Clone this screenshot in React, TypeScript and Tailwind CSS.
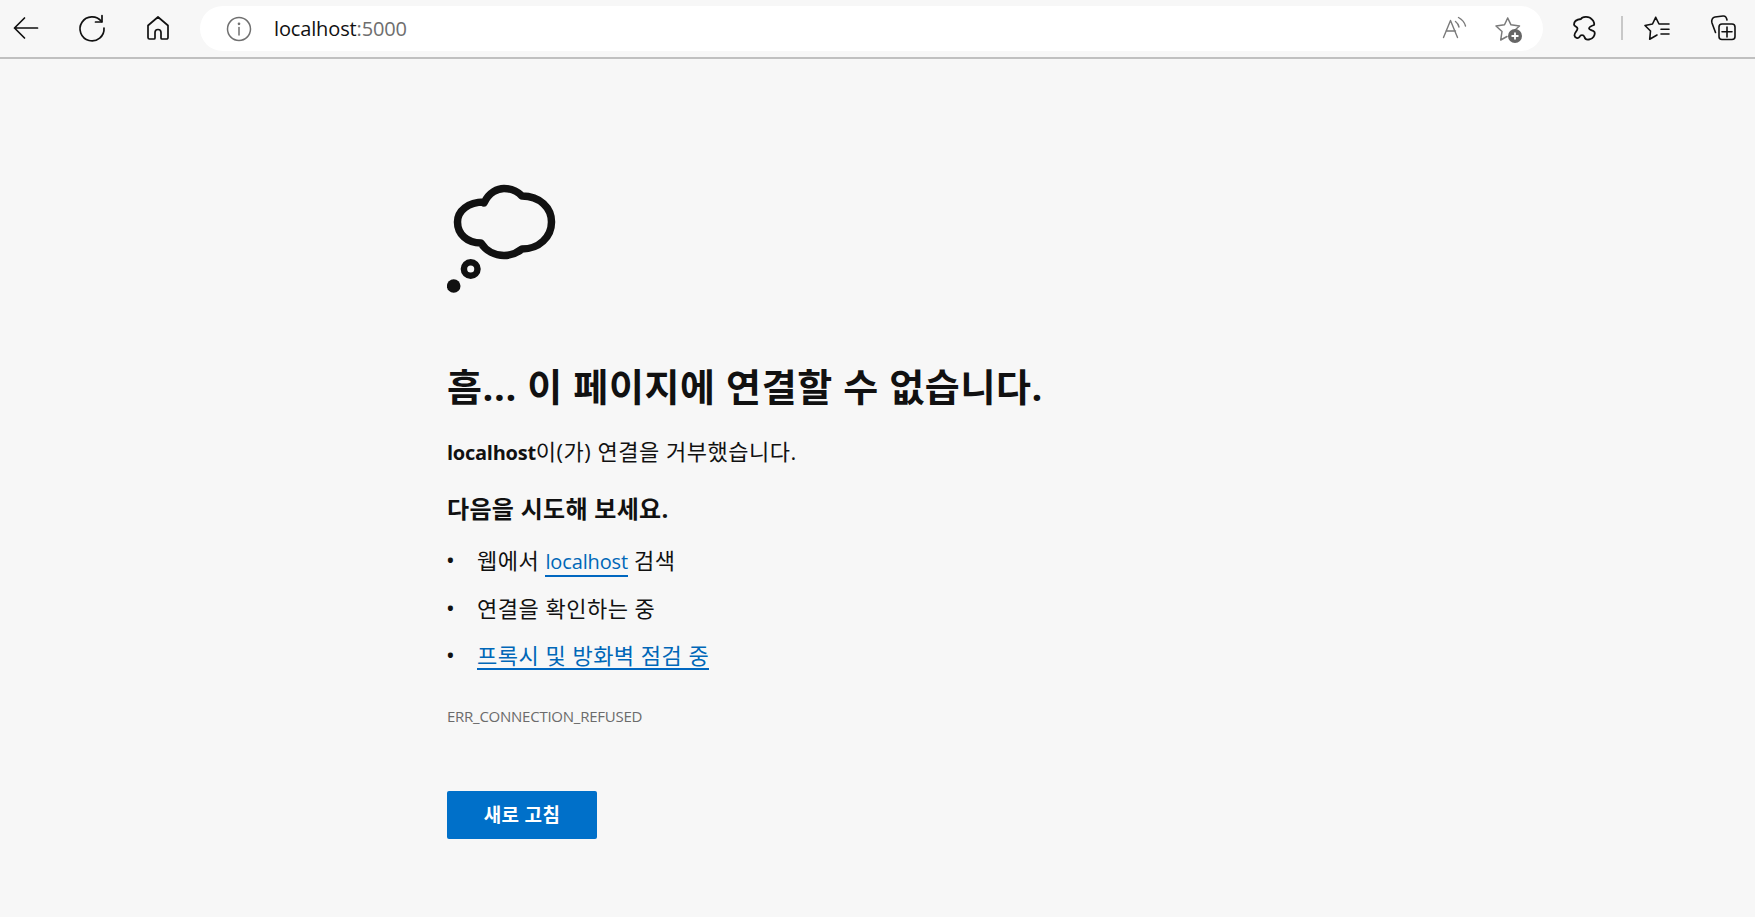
import React from "react";

function Back() {
  return (
    <svg width="30" height="30" viewBox="0 0 30 30" fill="none" stroke="#111" strokeWidth="1.7" strokeLinecap="round" strokeLinejoin="round">
      <path d="M3.5 15H26.5M13.5 5L3.5 15L13.5 25" />
    </svg>
  );
}
function Reload() {
  return (
    <svg width="30" height="30" viewBox="0 0 30 30" fill="none" stroke="#111" strokeWidth="1.7" strokeLinecap="round" strokeLinejoin="round">
      <path d="M24.5 8.5A12 12 0 1 0 27 15" />
      <path d="M25 2.5V9H18.5" />
    </svg>
  );
}
function Home() {
  return (
    <svg width="30" height="30" viewBox="0 0 30 30" fill="none" stroke="#111" strokeWidth="1.7" strokeLinecap="round" strokeLinejoin="round">
      <path d="M15 4L5 12.5V24.5A1.5 1.5 0 0 0 6.5 26H11A1 1 0 0 0 12 25V19.5A3 3 0 0 1 18 19.5V25A1 1 0 0 0 19 26H23.5A1.5 1.5 0 0 0 25 24.5V12.5Z" />
    </svg>
  );
}
function Info() {
  return (
    <svg width="26" height="26" viewBox="0 0 26 26" fill="none" stroke="#707070" strokeWidth="1.5" strokeLinecap="round">
      <circle cx="13" cy="13" r="11.5" />
      <path d="M13 11.5V19" />
      <circle cx="13" cy="7.8" r="0.6" fill="#707070" />
    </svg>
  );
}
function ReadAloud() {
  return (
    <svg width="26" height="26" viewBox="0 0 26 26" fill="none" stroke="#7a7a7a" strokeWidth="1.4" strokeLinecap="round" strokeLinejoin="round">
      <path d="M2.5 21.5L9.5 4.5L16.5 21.5M5 15H14.5" />
      <path d="M14.5 5.5C16.5 7 17.5 9 18 11M17.5 1.5C21 3.5 23.5 6 24.5 10" />
    </svg>
  );
}
function FavAdd() {
  return (
    <svg width="28" height="28" viewBox="0 0 28 28" fill="none">
      <path d="M13.7 3L17 9.8L25.5 11L21 15M13.7 3L10.5 9.8L2 11L8 16.5L6.7 25L13 21.5" stroke="#7a7a7a" strokeWidth="1.5" strokeLinejoin="round" strokeLinecap="round" />
      <circle cx="21" cy="21" r="7" fill="#666" />
      <path d="M21 17.5V24.5M17.5 21H24.5" stroke="#fff" strokeWidth="1.8" />
    </svg>
  );
}
function Ext() {
  return (
    <svg width="26" height="26" viewBox="0 0 26 26" fill="none" stroke="#111" strokeWidth="1.8" strokeLinejoin="round" strokeLinecap="round">
      <path d="M9 4C10 1.5 17 0.5 20 4.5C22 6 22.5 9 22 10C19 11 17 12 17 13.5C17 15 21 15 22.5 17C23.5 20 21 24 17 24.5C14.5 25 13 24 12.5 22C11.5 19.5 8.5 19.5 7.5 22C6 24 3 23 2.5 20.5C2 18 5.5 16 5.5 13.5C5.5 11.5 2 11.5 2 9.5C2 7 4 4.5 9 4Z" />
    </svg>
  );
}
function Favs() {
  return (
    <svg width="28" height="28" viewBox="0 0 28 28" fill="none" stroke="#111" strokeWidth="1.6" strokeLinejoin="round" strokeLinecap="round">
      <path d="M12.7 3.3L9.5 10L2 11.5L7.5 17L6.7 25.3L14 21M12.7 3.3L16 10H26M18 15.3H26M18 20H26" />
    </svg>
  );
}
function Collections() {
  return (
    <svg width="28" height="28" viewBox="0 0 28 28" fill="none" stroke="#111" strokeWidth="1.6" strokeLinejoin="round" strokeLinecap="round">
      <path d="M6.5 18.5L3 9C2 6 3.5 3.5 6 3L14 2C16 1.8 17.5 3 18 6" />
      <rect x="10" y="10" width="16" height="15.5" rx="3" />
      <path d="M18 13V23M13 17.8H23" />
    </svg>
  );
}

function Cloud() {
  return (
    <svg width="115" height="115" viewBox="17 10 115 115" fill="none" className="block">
      <path
        d="M54 33C59 22 68 18.5 74 18.5C82 18.5 88 22 92 26C110 26 121.5 38 121.5 52C121.5 67 109 79 92 79C87 83 81 85.5 74 85.5C65 85.5 56 81 51 73C37 73 27.5 64 27.5 52C27.5 41 38 32 54 32Z"
        stroke="#111"
        strokeWidth="7.5"
        strokeLinejoin="round"
      />
      <circle cx="40.7" cy="99" r="6.8" stroke="#111" strokeWidth="6.5" />
      <circle cx="23.7" cy="116" r="6.8" fill="#111" />
    </svg>
  );
}

export default function App() {
  return (
    <div className="h-[917px] w-[1755px] overflow-hidden bg-[#f7f7f7] text-[#111] font-['Open_Sans','Noto_Sans_CJK_KR',sans-serif]">
      <div className="flex h-[59px] items-start border-b-2 border-[#c0c0c0] bg-[#f7f7f7]">
        <div className="flex h-[57px] w-[200px] shrink-0 items-center pl-[11px] pb-[2px]">
          <Back />
          <div className="ml-[36px]"><Reload /></div>
          <div className="ml-[36px]"><Home /></div>
        </div>
        <div className="mt-[6px] flex h-[45px] w-[1343px] shrink-0 items-center rounded-full bg-white pl-[26px] pr-[21px]">
          <Info />
          <div className="ml-[22px] flex-1 text-[20px] tracking-[-0.14px] text-[#111]">
            localhost<span className="text-[#6e6e6e]">:5000</span>
          </div>
          <ReadAloud />
          <div className="ml-[27px]"><FavAdd /></div>
        </div>
        <div className="flex h-[57px] flex-1 items-center pl-[29px] pb-[2px]">
          <Ext />
          <div className="ml-[23px] h-[24px] w-[2px] bg-[#c8c8c8]" />
          <div className="ml-[20px]"><Favs /></div>
          <div className="ml-[38px]"><Collections /></div>
        </div>
      </div>

      <div className="ml-[447px] w-[700px] pt-[121px]">
        <Cloud />
        <h1 className="mt-[67px] text-[38px] leading-[48px] tracking-[0.6px] font-bold text-[#111]">
          흠... 이 페이지에 연결할 수 없습니다.
        </h1>
        <p className="mt-[27px] text-[22px] leading-[28px] tracking-[0.5px]">
          <b className="text-[20px] font-bold tracking-[-0.25px]">localhost</b>이(가) 연결을 거부했습니다.
        </p>
        <h2 className="mt-[27px] text-[24px] leading-[30px] tracking-[0.3px] font-bold">다음을 시도해 보세요.</h2>
        <ul className="mt-[22px] text-[22px] leading-[28px] tracking-[0.5px]">
          <li className="flex h-[48px] items-start">
            <span className="w-[30px] shrink-0 text-[18px] font-bold">•</span>
            <span>
              웹에서{" "}
              <a className="border-b-2 border-[#0067c0] text-[20px] tracking-[-0.15px] text-[#0067b8]">localhost</a>{" "}
              검색
            </span>
          </li>
          <li className="flex h-[47px] items-start">
            <span className="w-[30px] shrink-0 text-[18px] font-bold">•</span>
            <span>연결을 확인하는 중</span>
          </li>
          <li className="flex h-[48px] items-start">
            <span className="w-[30px] shrink-0 text-[18px] font-bold">•</span>
            <a className="h-[29px] border-b-2 border-[#0067c0] text-[#0067b8]">프록시 및 방화벽 점검 중</a>
          </li>
        </ul>
        <div className="mt-[17px] text-[15px] leading-[20px] tracking-[-0.25px] text-[#6b6b6b]">ERR_CONNECTION_REFUSED</div>
        <button className="mt-[65px] flex h-[48px] w-[150px] items-center justify-center rounded-[2px] bg-[#0070c9] text-[19px] tracking-[0.3px] font-bold text-white">
          새로 고침
        </button>
      </div>
    </div>
  );
}
